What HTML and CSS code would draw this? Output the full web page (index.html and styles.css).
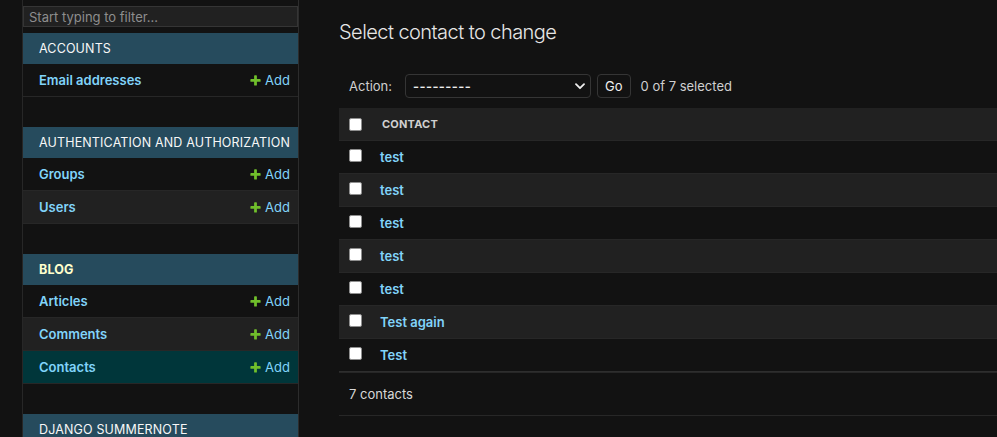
FILE: index.html
```html
<!DOCTYPE html>
<html lang="en">
<head>
<meta charset="utf-8">
<title>Select contact to change</title>
<link rel="stylesheet" href="styles.css">
</head>
<body>
<div class="page">
  <div class="toggle-nav"></div>
  <nav class="sidebar">
    <input class="nav-filter" type="search" placeholder="Start typing to filter...">
    <table class="module">
      <caption>Accounts</caption>
      <tr><th><a href="#">Email addresses</a></th><td class="add"><a href="#" class="addlink"><svg width="13" height="13" viewBox="0 0 1792 1792"><path fill="#70bf2b" d="M1600 796v192q0 40-28 68t-68 28h-416v416q0 40-28 68t-68 28h-192q-40 0-68-28t-28-68v-416h-416q-40 0-68-28t-28-68v-192q0-40 28-68t68-28h416v-416q0-40 28-68t68-28h192q40 0 68 28t28 68v416h416q40 0 68 28t28 68z"/></svg>Add</a></td></tr>
    </table>
    <table class="module">
      <caption>Authentication and Authorization</caption>
      <tr><th><a href="#">Groups</a></th><td class="add"><a href="#" class="addlink"><svg width="13" height="13" viewBox="0 0 1792 1792"><path fill="#70bf2b" d="M1600 796v192q0 40-28 68t-68 28h-416v416q0 40-28 68t-68 28h-192q-40 0-68-28t-28-68v-416h-416q-40 0-68-28t-28-68v-192q0-40 28-68t68-28h416v-416q0-40 28-68t68-28h192q40 0 68 28t28 68v416h416q40 0 68 28t28 68z"/></svg>Add</a></td></tr>
      <tr class="alt"><th><a href="#">Users</a></th><td class="add"><a href="#" class="addlink"><svg width="13" height="13" viewBox="0 0 1792 1792"><path fill="#70bf2b" d="M1600 796v192q0 40-28 68t-68 28h-416v416q0 40-28 68t-68 28h-192q-40 0-68-28t-28-68v-416h-416q-40 0-68-28t-28-68v-192q0-40 28-68t68-28h416v-416q0-40 28-68t68-28h192q40 0 68 28t28 68v416h416q40 0 68 28t28 68z"/></svg>Add</a></td></tr>
    </table>
    <table class="module current-app">
      <caption>Blog</caption>
      <tr><th><a href="#">Articles</a></th><td class="add"><a href="#" class="addlink"><svg width="13" height="13" viewBox="0 0 1792 1792"><path fill="#70bf2b" d="M1600 796v192q0 40-28 68t-68 28h-416v416q0 40-28 68t-68 28h-192q-40 0-68-28t-28-68v-416h-416q-40 0-68-28t-28-68v-192q0-40 28-68t68-28h416v-416q0-40 28-68t68-28h192q40 0 68 28t28 68v416h416q40 0 68 28t28 68z"/></svg>Add</a></td></tr>
      <tr class="alt"><th><a href="#">Comments</a></th><td class="add"><a href="#" class="addlink"><svg width="13" height="13" viewBox="0 0 1792 1792"><path fill="#70bf2b" d="M1600 796v192q0 40-28 68t-68 28h-416v416q0 40-28 68t-68 28h-192q-40 0-68-28t-28-68v-416h-416q-40 0-68-28t-28-68v-192q0-40 28-68t68-28h416v-416q0-40 28-68t68-28h192q40 0 68 28t28 68v416h416q40 0 68 28t28 68z"/></svg>Add</a></td></tr>
      <tr class="current-model"><th><a href="#">Contacts</a></th><td class="add"><a href="#" class="addlink"><svg width="13" height="13" viewBox="0 0 1792 1792"><path fill="#70bf2b" d="M1600 796v192q0 40-28 68t-68 28h-416v416q0 40-28 68t-68 28h-192q-40 0-68-28t-28-68v-416h-416q-40 0-68-28t-28-68v-192q0-40 28-68t68-28h416v-416q0-40 28-68t68-28h192q40 0 68 28t28 68v416h416q40 0 68 28t28 68z"/></svg>Add</a></td></tr>
    </table>
    <table class="module">
      <caption>Django Summernote</caption>
    </table>
  </nav>
  <main class="content">
    <h1>Select contact to change</h1>
    <div class="changelist">
      <div class="actions">
        <label class="action-label">Action:</label>
        <span class="select-wrap">
          <select class="action-select"><option>---------</option><option>Delete selected contacts</option></select>
          <svg class="chevron" width="10" height="7" viewBox="0 0 10 7"><path d="M1 1.2l4 4 4-4" fill="none" stroke="#eeeeee" stroke-width="1.8" stroke-linecap="round" stroke-linejoin="round"/></svg>
        </span>
        <button class="go-button" type="button">Go</button>
        <span class="action-counter">0 of 7 selected</span>
      </div>
      <table class="results">
        <thead>
          <tr><th class="cb-col"><span class="checkbox"></span></th><th class="col-head">Contact</th></tr>
        </thead>
        <tbody>
          <tr><td class="cb-col"><span class="checkbox"></span></td><th><a href="#">test</a></th></tr>
          <tr class="alt"><td class="cb-col"><span class="checkbox"></span></td><th><a href="#">test</a></th></tr>
          <tr><td class="cb-col"><span class="checkbox"></span></td><th><a href="#">test</a></th></tr>
          <tr class="alt"><td class="cb-col"><span class="checkbox"></span></td><th><a href="#">test</a></th></tr>
          <tr><td class="cb-col"><span class="checkbox"></span></td><th><a href="#">test</a></th></tr>
          <tr class="alt"><td class="cb-col"><span class="checkbox"></span></td><th><a href="#">Test again</a></th></tr>
          <tr class="last"><td class="cb-col"><span class="checkbox"></span></td><th><a href="#">Test</a></th></tr>
        </tbody>
      </table>
      <p class="paginator">7 contacts</p>
    </div>
  </main>
</div>
</body>
</html>
```
FILE: styles.css
```css
* { box-sizing: border-box; }
html, body {
  margin: 0;
  height: 437px;
  overflow: hidden;
  background: #121212;
  color: #eeeeee;
  font-family: Inter, "Noto Sans", "Liberation Sans", sans-serif;
  font-size: 13px;
}
a { color: #81d4fa; text-decoration: none; }

.page {
  display: flex;
  align-items: stretch;
  min-height: 437px;
}

.toggle-nav {
  flex: 0 0 23px;
  border-right: 1px solid #272727;
}

.sidebar {
  flex: 0 0 276px;
  width: 276px;
  overflow: hidden;
  border-right: 1px solid #2c2c2c;
}

.nav-filter {
  display: block;
  width: 100%;
  height: 21px;
  margin: 6px 0;
  padding: 2px 5px;
  border: 1px solid #353535;
  background: #212121;
  color: #eeeeee;
  font-family: inherit;
  font-size: 13px;
  outline: none;
}
.nav-filter::placeholder { color: #8e8e8e; }

.module {
  width: 100%;
  table-layout: fixed;
  border-collapse: collapse;
  margin-bottom: 30px;
}
.module caption {
  background: #264b5d;
  color: #f7f7f7;
  text-align: left;
  padding: 8px 4px 8px 16px;
  line-height: 15px;
  font-size: 12.5px;
  font-weight: 400;
  letter-spacing: 0.15px;
  text-transform: uppercase;
  white-space: nowrap;
  overflow: hidden;
}
.current-app caption {
  color: #ffffcc;
  font-weight: 700;
}
.module th, .module td {
  padding: 8px;
  line-height: 16px;
  border-bottom: 1px solid #272727;
  vertical-align: top;
}
.module th {
  text-align: left;
  padding-left: 16px;
  font-weight: 600;
  width: 200px;
}
.module td.add {
  text-align: right;
  padding-right: 8px;
  font-weight: 400;
  white-space: nowrap;
}
.module tr.alt { background: #212121; }
.module tr.current-model { background: #00363a; }

.addlink {
  display: inline-flex;
  align-items: center;
  vertical-align: top;
  height: 16px;
  gap: 3px;
}
.addlink svg { display: block; }

.content {
  flex: 1 1 auto;
  padding: 20px 0 0 40px;
  min-width: 0;
}
.content h1 {
  margin: 0 0 20px;
  font-size: 20px;
  line-height: 24px;
  font-weight: 300;
  letter-spacing: -0.55px;
  color: #e6e6e6;
}

.actions {
  display: flex;
  align-items: center;
  padding: 10px;
  line-height: 24px;
  color: #d0d0d0;
  white-space: nowrap;
}
.action-label { font-size: 13px; }
.select-wrap {
  position: relative;
  margin-left: 13px;
  display: block;
}
.action-select {
  appearance: none;
  -webkit-appearance: none;
  display: block;
  width: 186px;
  height: 24px;
  background: #121212;
  border: 1px solid #353535;
  border-radius: 4px;
  color: #eeeeee;
  font-family: inherit;
  font-size: 13px;
  font-weight: 600;
  padding: 0 0 0 7px;
  letter-spacing: 0.4px;
}
.chevron {
  position: absolute;
  right: 6px;
  top: 9px;
  pointer-events: none;
}
.go-button {
  margin-left: 6px;
  height: 24px;
  padding: 0 7px;
  background: #121212;
  border: 1px solid #353535;
  border-radius: 4px;
  color: #eeeeee;
  font-family: inherit;
  font-size: 13px;
  line-height: 1;
}
.action-counter {
  margin-left: 10px;
  font-size: 13px;
  color: #d0d0d0;
}

.results {
  width: 100%;
  border-collapse: collapse;
}
.results thead th {
  background: #212121;
  color: #d0d0d0;
  font-size: 11px;
  font-weight: 700;
  text-transform: uppercase;
  text-align: left;
  letter-spacing: 0.2px;
  padding: 8px 10px;
  line-height: 16px;
  border-bottom: 1px solid #272727;
  vertical-align: middle;
}
.results td, .results tbody th {
  padding: 8px;
  line-height: 16px;
  border-bottom: 1px solid #272727;
  text-align: left;
  vertical-align: top;
}
.results tbody th { font-weight: 600; }
.results .cb-col {
  width: 33px;
  padding-left: 10px;
  padding-right: 10px;
}
.results tr.alt { background: #212121; }
.results tr.last td, .results tr.last th { border-bottom-color: #2e2e2e; }

.checkbox {
  display: block;
  width: 13px;
  height: 13px;
  background: #ffffff;
  border: 1px solid #8f8f8f;
  border-radius: 2px;
}

.paginator {
  margin: 0;
  padding: 10px;
  line-height: 22px;
  font-size: 13px;
  color: #d8d8d8;
  border-top: 1px solid #272727;
  border-bottom: 1px solid #272727;
}
```
